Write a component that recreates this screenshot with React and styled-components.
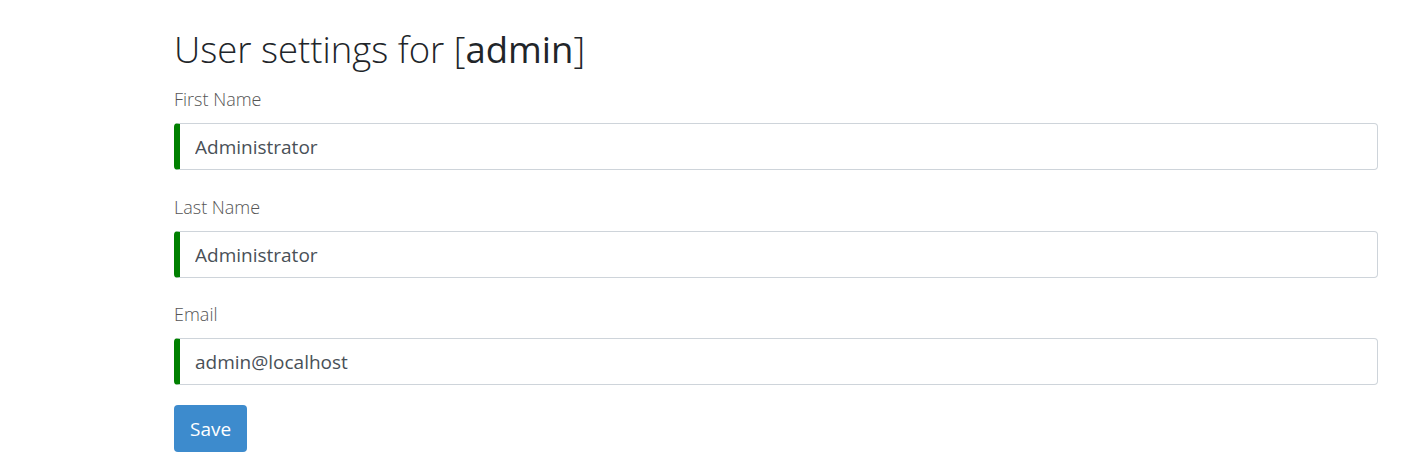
import React from 'react';
import styled, { createGlobalStyle } from 'styled-components';

const GlobalStyle = createGlobalStyle`
  body {
    margin: 0;
    background: #fff;
    font-family: "Open Sans", "Noto Sans", sans-serif;
  }
`;

const Page = styled.div`
  padding: 28px 27px 0 174px;
`;

const Title = styled.h1`
  margin: 0 0 15px;
  font-size: 36.5px;
  font-weight: 300;
  color: #212529;
  line-height: 43px;

  b {
    font-weight: 500;
  }
`;

const Form = styled.form`
  display: flex;
  flex-direction: column;
`;

const Group = styled.div`
  display: flex;
  flex-direction: column;
  margin-bottom: 23.5px;
`;

const Label = styled.label`
  font-size: 18px;
  font-weight: 300;
  color: #555;
  line-height: 27px;
  margin-bottom: 10px;
`;

const Input = styled.input`
  box-sizing: border-box;
  height: 47px;
  padding: 1px 15px 0;
  font-family: inherit;
  font-size: 19px;
  color: #495057;
  background: #fff;
  border: 1px solid #ced4da;
  border-left: 6px solid ${p => (p.$valid ? '#008000' : '#ced4da')};
  border-radius: 4px;
  outline: none;
`;

const SaveButton = styled.button`
  align-self: flex-start;
  height: 47px;
  padding: 1px 16px 0;
  margin-top: -3.5px;
  font-family: inherit;
  font-size: 19px;
  color: #fff;
  background: #3d8bcd;
  border: none;
  border-radius: 4px;
  cursor: pointer;
`;

const fields = [
  { id: 'first', label: 'First Name', value: 'Administrator' },
  { id: 'last', label: 'Last Name', value: 'Administrator' },
  { id: 'email', label: 'Email', value: 'admin@localhost' },
];

const App = () => (
  <>
    <GlobalStyle />
    <Page>
      <Title>
        User settings for [<b>admin</b>]
      </Title>
      <Form onSubmit={e => e.preventDefault()}>
        {fields.map(f => (
          <Group key={f.id}>
            <Label htmlFor={f.id}>{f.label}</Label>
            <Input id={f.id} $valid defaultValue={f.value} />
          </Group>
        ))}
        <SaveButton type="submit">Save</SaveButton>
      </Form>
    </Page>
  </>
);

export default App;
